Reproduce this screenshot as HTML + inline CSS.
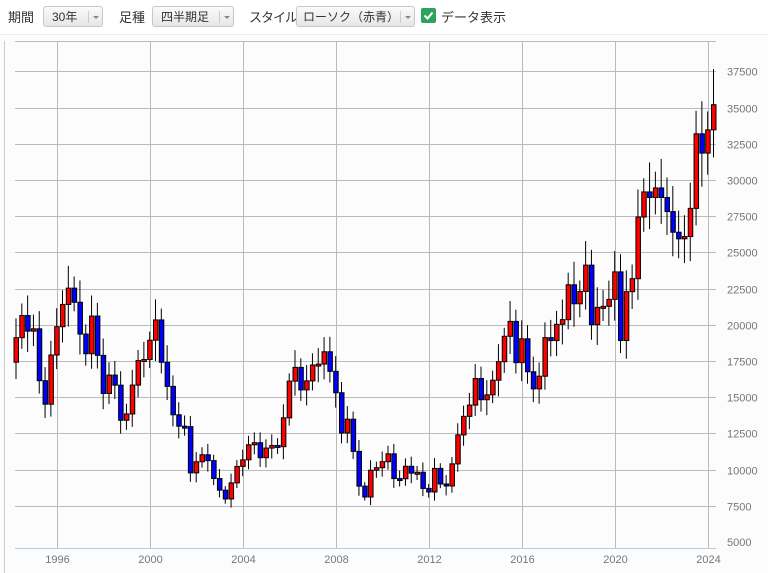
<!DOCTYPE html>
<html><head><meta charset="utf-8"><style>
body{margin:0;width:768px;height:573px;background:#fcfcfc;font-family:"Liberation Sans","Noto Sans CJK JP",sans-serif;overflow:hidden;position:relative}
.bar{position:absolute;left:0;top:0;width:768px;height:34px;background:#fff;border-bottom:1px solid #ececec;font-size:13px;color:#333}
.lbl{position:absolute;top:7px;white-space:nowrap}
.sel{position:absolute;top:6px;height:21px;border:1px solid #c8c8c8;border-radius:3px;background:linear-gradient(#fafafa,#e6e6e6);font-size:12px;line-height:20px;box-sizing:border-box;padding-left:8px;white-space:nowrap}
.sel i{position:absolute;right:0;top:4px;width:13px;height:12px;border-left:1px solid #ccc;font-style:normal}
.sel i:after{content:"";position:absolute;left:4px;top:5px;border:3px solid transparent;border-top:3px solid #888}
.cb{position:absolute;left:421px;top:8px;width:15px;height:15px;background:#2ea15a;border-radius:2px}
</style></head><body>
<div class="bar">
<span class="lbl" style="left:8px">期間</span>
<div class="sel" style="left:43px;width:60px">30年<i></i></div>
<span class="lbl" style="left:119px">足種</span>
<div class="sel" style="left:152px;width:82px">四半期足<i></i></div>
<span class="lbl" style="left:249px;letter-spacing:-1px">スタイル</span>
<div class="sel" style="left:296px;width:119px;padding-left:6px">ローソク（赤青）<i></i></div>
<div class="cb"><svg width="15" height="15"><path d="M3.5 7.5l3 3 5-6" stroke="#fff" stroke-width="2" fill="none"/></svg></div>
<span class="lbl" style="left:441px">データ表示</span>
</div>
<svg id="c" width="768" height="573" style="position:absolute;left:0;top:0"></svg>
<script>
var s='';
var Y=function(p){return 542-(p-5000)*0.01448;};
s+='<line x1="4.5" y1="41" x2="4.5" y2="573" stroke="#ccc"/>';
s+='<line x1="15" y1="41.5" x2="716" y2="41.5" stroke="#bbb"/>';
for(var p=7500;p<=37500;p+=2500){var y=Math.round(Y(p))+.5;s+='<line x1="15" y1="'+y+'" x2="716" y2="'+y+'" stroke="#bbb"/>';s+='<text x="727" y="'+(y+4)+'" font-size="11" fill="#777">'+p+'</text>';}
s+='<text x="727" y="546" font-size="11" fill="#777">5000</text>';
for(var k=0;k<8;k++){var x=Math.round(57+k*93.0)+.5;s+='<line x1="'+x+'" y1="41" x2="'+x+'" y2="548" stroke="#bbb"/>';s+='<text x="'+x+'" y="563" font-size="11" fill="#777" text-anchor="middle">'+(1996+4*k)+'</text>';}
s+='<line x1="15" y1="548.5" x2="716" y2="548.5" stroke="#b6cde6"/>';
var C=[17417,19111,20643,19563,19723,16140,14517,17913,19868,21407,22530,21556,19361,18003,20605,17888,15258,16527,15830,13406,13842,15837,17530,17605,18934,20337,17411,15747,13785,12999,12969,9774,10542,11024,10621,9383,8579,7972,9083,10219,10676,11715,11858,10823,11488,11668,11584,13574,16111,17059,15505,16127,17225,17287,18138,16785,15307,12525,13481,11259,8859,8109,9958,10133,10546,11089,9382,9369,10228,9755,9816,8700,8455,10083,9006,8870,10395,12397,13677,14455,16291,14827,15162,16173,17450,19206,20235,17388,19033,16758,15575,16449,19114,18909,20033,20356,22764,21454,22304,24120,20014,21205,21275,21755,23656,18917,22288,23185,27444,29178,28791,29452,28791,27821,26393,25937,26094,28041,33189,31857,33464,35200];
for(var i=1;i<C.length;i++){var o=C[i-1],c=C[i],q=i-1;var x=57+(q-8)*5.8125+5.5;
var f=0.03+0.04*Math.abs(Math.sin(i*1.7));var hi=Math.max(o,c)*(1+f),lo=Math.min(o,c)*(1-0.8*f-0.02*Math.abs(Math.cos(i)));
var col=c>=o?'#f00':'#00f';var t=Y(Math.max(o,c)),b=Y(Math.min(o,c));if(b-t<2)b=t+2;
s+='<line x1="'+x+'" y1="'+Y(hi)+'" x2="'+x+'" y2="'+Y(lo)+'" stroke="#000"/>';
s+='<rect x="'+(x-2)+'" y="'+t+'" width="4.5" height="'+(b-t)+'" fill="'+col+'" stroke="#000" stroke-width="1"/>';}
document.getElementById('c').innerHTML=s;
</script>
</body></html>
